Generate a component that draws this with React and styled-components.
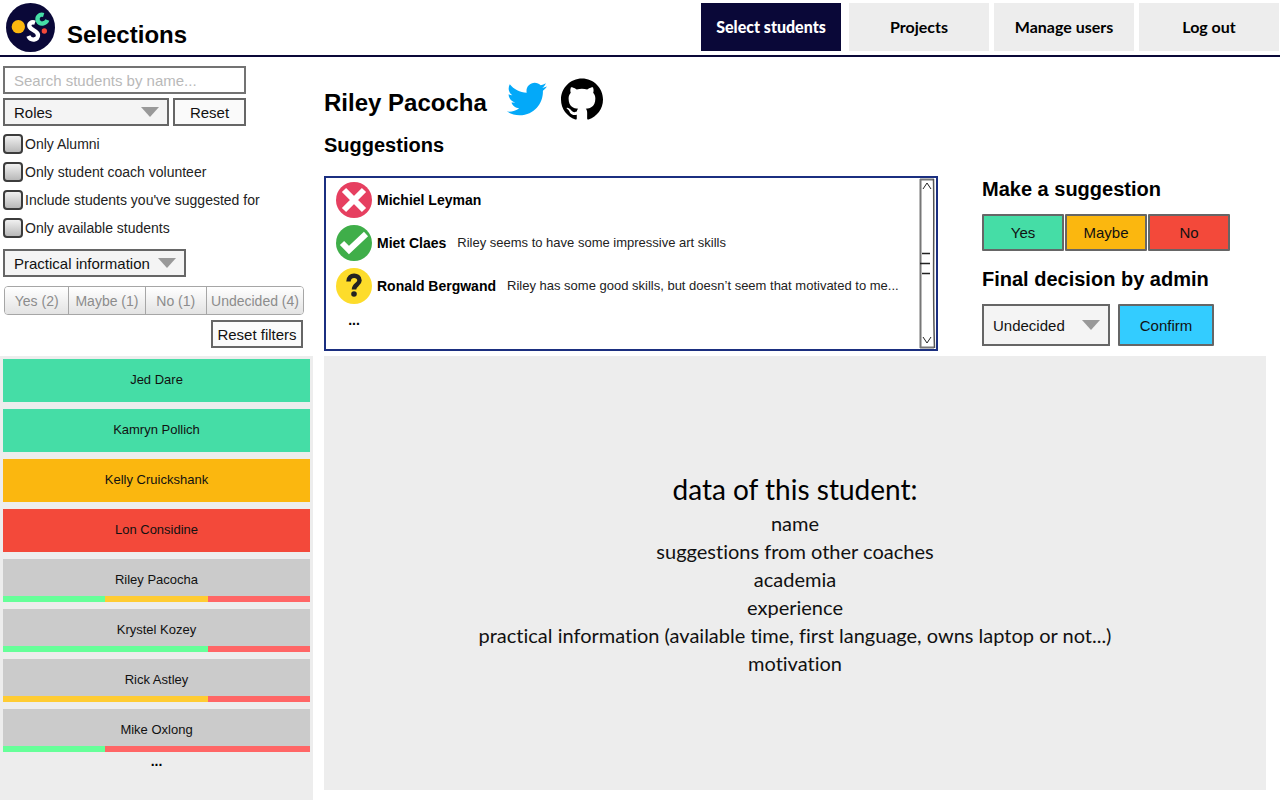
import React from 'react';
import styled, { createGlobalStyle } from 'styled-components';
import { FaTwitter } from 'react-icons/fa';

const GlobalStyle = createGlobalStyle`
  *, *::before, *::after { box-sizing: border-box; }
  body {
    margin: 0;
    background: #fff;
    color: #000;
    font-family: "Liberation Sans", Arial, sans-serif;
  }
  h1, h2, p, ul { margin: 0; padding: 0; }
  ul { list-style: none; }
  button, input, select { font-family: inherit; margin: 0; }
  button { cursor: pointer; }
`;

const Page = styled.div`
  min-height: 100vh;
  display: flex;
  flex-direction: column;
`;

const Header = styled.header`
  display: flex;
  justify-content: space-between;
  align-items: flex-start;
  height: 57px;
  padding: 3px 1px 0 6px;
  border-bottom: 2px solid #0a0838;
`;

const Brand = styled.div`
  display: flex;
  gap: 12px;
`;

const Title = styled.h1`
  font-size: 24px;
  line-height: 28px;
  padding-top: ${(p) => p.$top}px;
`;

const Nav = styled.nav`
  display: flex;
  gap: 5px;
`;

const NavLink = styled.a`
  display: flex;
  align-items: center;
  justify-content: center;
  width: 140px;
  height: 48px;
  margin-right: ${(p) => (p.$active ? 3 : 0)}px;
  background: ${(p) => (p.$active ? '#0a0838' : '#ededed')};
  color: ${(p) => (p.$active ? '#fff' : '#000')};
  font: ${(p) => (p.$active ? 900 : 700)} 16px/24px Lato, sans-serif;
  text-decoration: none;
`;

const Columns = styled.div`
  flex: 1;
  display: grid;
  grid-template-columns: 313px 1fr;
`;

const Sidebar = styled.aside`
  display: flex;
  flex-direction: column;
`;

const Filters = styled.form`
  display: flex;
  flex-direction: column;
  align-items: flex-start;
  padding: 9px 10px 8px 3px;
`;

const SearchInput = styled.input`
  width: 243px;
  height: 28px;
  margin-bottom: 4px;
  padding: 0 9px;
  border: 2px solid #737373;
  font-size: 15px;
  &::placeholder { color: #b9b9b9; opacity: 1; }
`;

const Row = styled.div`
  display: flex;
  gap: ${(p) => p.$gap}px;
`;

const SelectBox = styled.div`
  display: grid;
  align-items: center;
  width: ${(p) => p.$width}px;
  height: ${(p) => p.$height}px;
  > * { grid-area: 1 / 1; }
  > svg { justify-self: end; margin-right: 10px; pointer-events: none; }
`;

const Select = styled.select`
  appearance: none;
  width: 100%;
  height: 100%;
  padding: 0 9px;
  border: 2px solid #666;
  border-radius: 0;
  background: #f4f4f4;
  color: #111;
  font-size: 15px;
`;

const Button = styled.button`
  width: ${(p) => p.$width}px;
  height: ${(p) => p.$height || 28}px;
  padding: 0;
  border: 2px solid #666;
  border-radius: ${(p) => (p.$color ? 1 : 0)}px;
  background: ${(p) => p.$color || '#fafafa'};
  color: #111;
  font-size: 15px;
`;

const Checks = styled.div`
  display: flex;
  flex-direction: column;
  gap: 8px;
  padding: 8px 0 11px;
`;

const CheckLabel = styled.label`
  display: flex;
  align-items: center;
  gap: 2px;
  height: 20px;
  color: #222;
  font-size: 14px;
`;

const Checkbox = styled.input`
  appearance: none;
  width: 20px;
  height: 20px;
  margin: 0;
  border: 2px solid #3c3c3c;
  border-radius: 4px;
  background: linear-gradient(#f0f0f0, #b8b8b8);
`;

const Segments = styled.div`
  display: flex;
  width: 300px;
  height: 29px;
  margin: 9px 0 5px 1px;
  border: 1px solid #a6a6a6;
  border-radius: 4px;
  overflow: hidden;
`;

const Segment = styled.button`
  flex: ${(p) => p.$grow} 1 0;
  padding: 0;
  border: 0;
  border-left: ${(p) => (p.$first ? 0 : 1)}px solid #a6a6a6;
  background: linear-gradient(#fff, #e3e3e3);
  color: #8c8c8c;
  font-size: 14px;
  white-space: nowrap;
`;

const ResetRow = styled.div`
  align-self: flex-end;
`;

const StudentPanel = styled.section`
  flex: 1;
  padding: 3px;
  background: #ededed;
`;

const StudentList = styled.ul`
  display: flex;
  flex-direction: column;
  gap: 7px;
`;

const StudentCard = styled.button`
  display: grid;
  width: 100%;
  height: 43px;
  padding: 0;
  border: 0;
  background: ${(p) => p.$color};
  color: #111;
  font-size: 13px;
  line-height: 41px;
  > * { grid-area: 1 / 1; }
`;

const VoteBar = styled.span`
  align-self: end;
  display: flex;
  height: 6px;
`;

const Vote = styled.span`
  flex: ${(p) => p.$share} 1 0;
  background: ${(p) => p.$color};
`;

const More = styled.p`
  width: ${(p) => p.$width};
  font-size: 14px;
  font-weight: 700;
  line-height: 18px;
  text-align: center;
`;

const Main = styled.main`
  display: flex;
  flex-direction: column;
  gap: 5px;
  padding: 21px 14px 10px 11px;
`;

const Profile = styled.div`
  display: flex;
  align-items: center;
  height: 42px;
`;

const SocialLinks = styled.div`
  display: flex;
  align-items: center;
  gap: 14px;
  margin-left: 20px;
  a { display: flex; color: inherit; }
`;

const Heading = styled.h2`
  font-size: 20px;
  line-height: 24px;
`;

const SuggestionTitle = styled(Heading)`
  margin: 13px 0 14px;
`;

const Review = styled.div`
  display: grid;
  grid-template-columns: 1fr 284px;
  gap: 44px;
`;

const SuggestionBox = styled.section`
  display: flex;
  justify-content: space-between;
  height: 175px;
  border: 2px solid #1b2f80;
`;

const SuggestionList = styled.ul`
  display: flex;
  flex-direction: column;
  gap: 7px;
  padding: 4px 0 0 10px;
`;

const Suggestion = styled.li`
  display: flex;
  align-items: center;
  font-size: 14px;
  line-height: 20px;
  svg { margin-right: 5px; }
`;

const Comment = styled.span`
  margin-left: 11px;
  color: #222;
  font-size: 13px;
`;

const Decision = styled.section`
  display: flex;
  flex-direction: column;
  gap: 13px;
  padding-top: 1px;
`;

const DecisionGroup = styled.div`
  display: flex;
  flex-direction: column;
  gap: 13px;
  padding-bottom: 3px;
`;

const StudentData = styled.section`
  flex: 1;
  display: flex;
  flex-direction: column;
  align-items: center;
  justify-content: center;
  background: #ededed;
  color: #111;
  font: 20px/28px Lato, sans-serif;
  font-variant-ligatures: none;
`;

const DataTitle = styled.h2`
  color: #000;
  font-size: 28px;
  font-weight: 400;
  line-height: 40px;
`;

const GREEN = '#45dda6';
const YELLOW = '#fbb70f';
const RED = '#f3493a';
const GREY = '#cbcbcb';
const VOTES = { yes: '#66ff99', maybe: '#ffcc33', no: '#ff6666' };

const students = [
  { name: 'Jed Dare', color: GREEN },
  { name: 'Kamryn Pollich', color: GREEN },
  { name: 'Kelly Cruickshank', color: YELLOW },
  { name: 'Lon Considine', color: RED },
  { name: 'Riley Pacocha', color: GREY, votes: [['yes', 1], ['maybe', 1], ['no', 1]] },
  { name: 'Krystel Kozey', color: GREY, votes: [['yes', 2], ['no', 1]] },
  { name: 'Rick Astley', color: GREY, votes: [['maybe', 2], ['no', 1]] },
  { name: 'Mike Oxlong', color: GREY, votes: [['yes', 1], ['no', 2]] },
];

const suggestions = [
  { name: 'Michiel Leyman', verdict: 'no' },
  { name: 'Miet Claes', verdict: 'yes', comment: 'Riley seems to have some impressive art skills' },
  {
    name: 'Ronald Bergwand',
    verdict: 'maybe',
    comment: 'Riley has some good skills, but doesn’t seem that motivated to me...',
  },
];

const checks = [
  'Only Alumni',
  'Only student coach volunteer',
  "Include students you've suggested for",
  'Only available students',
];

const segments = [['Yes (2)', 64], ['Maybe (1)', 76], ['No (1)', 61], ['Undecided (4)', 97]];

function Logo() {
  return (
    <svg width="49" height="49" viewBox="0 0 147 147" role="img" aria-label="OSC">
      <circle cx="73.5" cy="73.5" r="73.5" fill="#0a0838" />
      <circle cx="37" cy="71" r="20" fill="#fbb70f" />
      <path d="M87 59C76 55 67 63 71 72C76 83 95 83 96 96C97 112 74 115 67 99" fill="none" stroke="#fff" strokeWidth="13" />
      <path d="M113 36C100 32 91 43 96 54C102 66 119 63 124 51" fill="none" stroke="#45dda6" strokeWidth="13" />
      <circle cx="115" cy="84" r="8" fill="#f3493a" />
    </svg>
  );
}

function GithubMark() {
  return (
    <svg width="42" height="42" viewBox="0 0 24 24" fill="#000">
      <path d="M12 .297c-6.63 0-12 5.373-12 12 0 5.303 3.438 9.8 8.205 11.385.6.113.82-.258.82-.577 0-.285-.01-1.04-.015-2.04-3.338.724-4.042-1.61-4.042-1.61C4.422 18.07 3.633 17.7 3.633 17.7c-1.087-.744.084-.729.084-.729 1.205.084 1.838 1.236 1.838 1.236 1.07 1.835 2.809 1.305 3.495.998.108-.776.417-1.305.76-1.605-2.665-.3-5.466-1.332-5.466-5.93 0-1.31.465-2.38 1.235-3.22-.135-.303-.54-1.523.105-3.176 0 0 1.005-.322 3.3 1.23.96-.267 1.98-.399 3-.405 1.02.006 2.04.138 3 .405 2.28-1.552 3.285-1.23 3.285-1.23.645 1.653.24 2.873.12 3.176.765.84 1.23 1.91 1.23 3.22 0 4.61-2.805 5.625-5.475 5.92.42.36.81 1.096.81 2.22 0 1.606-.015 2.896-.015 3.286 0 .315.21.69.825.57C20.565 22.092 24 17.592 24 12.297c0-6.627-5.373-12-12-12" />
    </svg>
  );
}

function Verdict({ kind }) {
  const fill = { no: '#e63f60', yes: '#3fae49', maybe: '#fddc2b' }[kind];
  return (
    <svg width="36" height="36" viewBox="0 0 36 36" role="img" aria-label={kind}>
      <circle cx="18" cy="18" r="18" fill={fill} />
      {kind === 'no' && <path d="M8 8L28 28M28 8L8 28" stroke="#fff" strokeWidth="6" />}
      {kind === 'yes' && <path d="M6 18L13 25L30 9" fill="none" stroke="#fff" strokeWidth="6" />}
      {kind === 'maybe' && (
        <>
          <path d="M12.500 13.500C12.500 6 23.500 6 23.500 12.500C23.500 16.500 18 16.500 18 21.500" fill="none" stroke="#222" strokeWidth="4.500" />
          <circle cx="18" cy="26" r="2.800" fill="#222" />
        </>
      )}
    </svg>
  );
}

function ScrollTrack() {
  return (
    <svg width="17" height="171" viewBox="0 0 17 171" fill="none" stroke="#222" aria-hidden="true">
      <path d="M1.500 1V170M1 1.500H15M1 169.500H15" stroke="#777" strokeWidth="2" />
      <path d="M14.500 1C15.500 50 13.500 110 15.500 170" stroke="#555" strokeWidth="1.500" />
      <path d="M4 11L8 5L12 11M4 159L8 165L12 159" />
      <path d="M3 75.500H11M1 85.500H11M3 95.500H11" strokeWidth="1.500" />
    </svg>
  );
}

function Dropdown({ label, value, width, height = 28 }) {
  return (
    <SelectBox $width={width} $height={height}>
      <Select aria-label={label} defaultValue={value}>
        <option>{value}</option>
      </Select>
      <svg width="18" height="10" viewBox="0 0 18 10" fill="#999">
        <path d="M0 0H18L9 10Z" />
      </svg>
    </SelectBox>
  );
}

export default function App() {
  return (
    <Page>
      <GlobalStyle />
      <Header>
        <Brand>
          <Logo />
          <Title $top={18}>Selections</Title>
        </Brand>
        <Nav>
          <NavLink href="#students" $active>Select students</NavLink>
          <NavLink href="#projects">Projects</NavLink>
          <NavLink href="#users">Manage users</NavLink>
          <NavLink href="#logout">Log out</NavLink>
        </Nav>
      </Header>
      <Columns>
        <Sidebar>
          <Filters onSubmit={(e) => e.preventDefault()}>
            <SearchInput aria-label="Search students" placeholder="Search students by name..." />
            <Row $gap={4}>
              <Dropdown label="Roles" value="Roles" width={166} />
              <Button type="button" $width={73}>Reset</Button>
            </Row>
            <Checks>
              {checks.map((text) => (
                <CheckLabel key={text}>
                  <Checkbox type="checkbox" />
                  {text}
                </CheckLabel>
              ))}
            </Checks>
            <Dropdown label="Practical information" value="Practical information" width={183} />
            <Segments>
              {segments.map(([text, grow], i) => (
                <Segment key={text} type="button" $grow={grow} $first={i === 0}>{text}</Segment>
              ))}
            </Segments>
            <ResetRow>
              <Button type="reset" $width={92}>Reset filters</Button>
            </ResetRow>
          </Filters>
          <StudentPanel>
            <StudentList>
              {students.map(({ name, color, votes }) => (
                <li key={name}>
                  <StudentCard type="button" $color={color}>
                    <span>{name}</span>
                    {votes && (
                      <VoteBar>
                        {votes.map(([kind, share]) => (
                          <Vote key={kind} $share={share} $color={VOTES[kind]} />
                        ))}
                      </VoteBar>
                    )}
                  </StudentCard>
                </li>
              ))}
            </StudentList>
            <More $width="100%">...</More>
          </StudentPanel>
        </Sidebar>
        <Main>
          <div>
            <Profile>
              <Title $top={8}>Riley Pacocha</Title>
              <SocialLinks>
                <a href="#twitter" aria-label="Twitter"><FaTwitter size={40} color="#03a9f9" /></a>
                <a href="#github" aria-label="GitHub"><GithubMark /></a>
              </SocialLinks>
            </Profile>
            <SuggestionTitle>Suggestions</SuggestionTitle>
          </div>
          <Review>
            <SuggestionBox>
              <SuggestionList>
                {suggestions.map(({ name, verdict, comment }) => (
                  <Suggestion key={name}>
                    <Verdict kind={verdict} />
                    <strong>{name}</strong>
                    {comment && <Comment>{comment}</Comment>}
                  </Suggestion>
                ))}
                <li><More $width="36px">...</More></li>
              </SuggestionList>
              <ScrollTrack />
            </SuggestionBox>
            <Decision>
              <DecisionGroup>
                <Heading>Make a suggestion</Heading>
                <Row $gap={1}>
                  <Button type="button" $width={82} $height={37} $color={GREEN}>Yes</Button>
                  <Button type="button" $width={82} $height={37} $color={YELLOW}>Maybe</Button>
                  <Button type="button" $width={82} $height={37} $color={RED}>No</Button>
                </Row>
              </DecisionGroup>
              <DecisionGroup>
                <Heading>Final decision by admin</Heading>
                <Row $gap={8}>
                  <Dropdown label="Final decision" value="Undecided" width={128} height={42} />
                  <Button type="button" $width={96} $height={42} $color="#33ccff">Confirm</Button>
                </Row>
              </DecisionGroup>
            </Decision>
          </Review>
          <StudentData>
            <DataTitle>data of this student:</DataTitle>
            <p>name</p>
            <p>suggestions from other coaches</p>
            <p>academia</p>
            <p>experience</p>
            <p>practical information (available time, first language, owns laptop or not...)</p>
            <p>motivation</p>
          </StudentData>
        </Main>
      </Columns>
    </Page>
  );
}
